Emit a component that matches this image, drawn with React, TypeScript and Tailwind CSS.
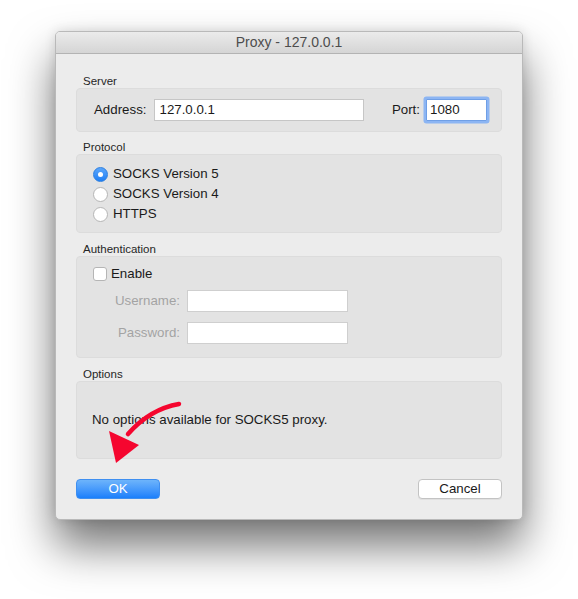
import React from "react";

const font = { fontFamily: '"Liberation Sans", Arial, sans-serif' };

function Radio({ checked, label }: { checked?: boolean; label: string }) {
  return (
    <div className="flex items-center h-[20px]">
      {checked ? (
        <div className="w-[15px] h-[15px] rounded-full bg-gradient-to-b from-[#5aa6fb] to-[#1c7ff5] border border-[#2d7fe0] flex items-center justify-center">
          <div className="w-[5px] h-[5px] rounded-full bg-white" />
        </div>
      ) : (
        <div className="w-[15px] h-[15px] rounded-full bg-white border border-[#b5b5b5]" />
      )}
      <span className="ml-[5px] text-[13.3px] text-[#1a1a1a]">{label}</span>
    </div>
  );
}

function GroupLabel({ children }: { children: React.ReactNode }) {
  return <div className="h-[14px] leading-[14px] text-[11.5px] text-[#262626] pl-[7px]">{children}</div>;
}

export default function App() {
  return (
    <div className="relative w-[578px] h-[599px] bg-white pt-[31px] pl-[55px] overflow-hidden" style={font}>
      <div className="w-[468px] h-[489px] rounded-[5px] bg-[#ececec] border border-[#b9b9b9] shadow-[0_26px_45px_rgba(0,0,0,0.55),0_0_12px_rgba(0,0,0,0.12)] flex flex-col overflow-hidden">
        <div className="h-[22px] shrink-0 bg-gradient-to-b from-[#ebebeb] to-[#d5d5d5] border-b border-[#b3b3b3] flex items-center justify-center text-[14px] text-[#4d4d4d]">
          Proxy - 127.0.0.1
        </div>
        <div className="flex flex-col px-[20px] pt-[20px]">
          <GroupLabel>Server</GroupLabel>
          <div className="h-[44px] rounded-[4px] bg-[#e3e3e3] border border-[#dcdcdc] flex items-center pl-[17px] pr-[14px]">
            <span className="text-[13.3px] text-[#1a1a1a]">Address:</span>
            <div className="ml-[8px] w-[210px] h-[22px] bg-white border border-[#c6c6c6] flex items-center pl-[4px] text-[13.3px] text-[#1a1a1a]">
              127.0.0.1
            </div>
            <span className="ml-auto text-[13.3px] text-[#1a1a1a]">Port:</span>
            <div className="ml-[6px] w-[61px] h-[22px] bg-white border border-[#6f9fe6] shadow-[0_0_0_2.5px_#8cb5f3] rounded-[1px] flex items-center pl-[3px] text-[13.3px] text-[#1a1a1a]">
              1080
            </div>
          </div>

          <div className="mt-[8px]">
            <GroupLabel>Protocol</GroupLabel>
          </div>
          <div className="h-[79px] rounded-[4px] bg-[#e3e3e3] border border-[#dcdcdc] flex flex-col pl-[16px] pt-[9px]">
            <Radio checked label="SOCKS Version 5" />
            <Radio label="SOCKS Version 4" />
            <Radio label="HTTPS" />
          </div>

          <div className="mt-[9px]">
            <GroupLabel>Authentication</GroupLabel>
          </div>
          <div className="h-[102px] rounded-[4px] bg-[#e3e3e3] border border-[#dcdcdc] flex flex-col pl-[16px] pt-[10px]">
            <div className="flex items-center h-[14px]">
              <div className="w-[14px] h-[14px] rounded-[3px] bg-white border border-[#b5b5b5]" />
              <span className="ml-[4px] text-[13.3px] text-[#1a1a1a]">Enable</span>
            </div>
            <div className="flex items-center mt-[9px]">
              <span className="w-[87px] text-right text-[13.3px] text-[#a3a3a3]">Username:</span>
              <div className="ml-[7px] w-[161px] h-[22px] bg-white border border-[#cfcfcf]" />
            </div>
            <div className="flex items-center mt-[10px]">
              <span className="w-[87px] text-right text-[13.3px] text-[#a3a3a3]">Password:</span>
              <div className="ml-[7px] w-[161px] h-[22px] bg-white border border-[#cfcfcf]" />
            </div>
          </div>

          <div className="mt-[9px]">
            <GroupLabel>Options</GroupLabel>
          </div>
          <div className="h-[78px] rounded-[4px] bg-[#e3e3e3] border border-[#dcdcdc] flex items-center pl-[15px]">
            <span className="text-[13.3px] text-[#1a1a1a]">No options available for SOCKS5 proxy.</span>
          </div>

          <div className="mt-[20px] flex justify-between">
            <div className="w-[84px] h-[20px] rounded-[4px] bg-gradient-to-b from-[#6db4fb] to-[#197ffb] border border-[#3f8ff0] flex items-center justify-center text-[13.3px] text-white">
              OK
            </div>
            <div className="w-[84px] h-[20px] rounded-[4px] bg-white border border-[#c3c3c3] shadow-[0_1px_0_rgba(0,0,0,0.05)] flex items-center justify-center text-[13.3px] text-[#1a1a1a]">
              Cancel
            </div>
          </div>
        </div>
      </div>

      <svg className="absolute left-0 top-0 pointer-events-none" width="578" height="599" viewBox="0 0 578 599">
        <path d="M179 404 Q150 409 128 434" fill="none" stroke="#f5062f" strokeWidth="4.5" strokeLinecap="round" />
        <polygon points="109,431 139,445 116,463" fill="#f5062f" />
      </svg>
    </div>
  );
}
